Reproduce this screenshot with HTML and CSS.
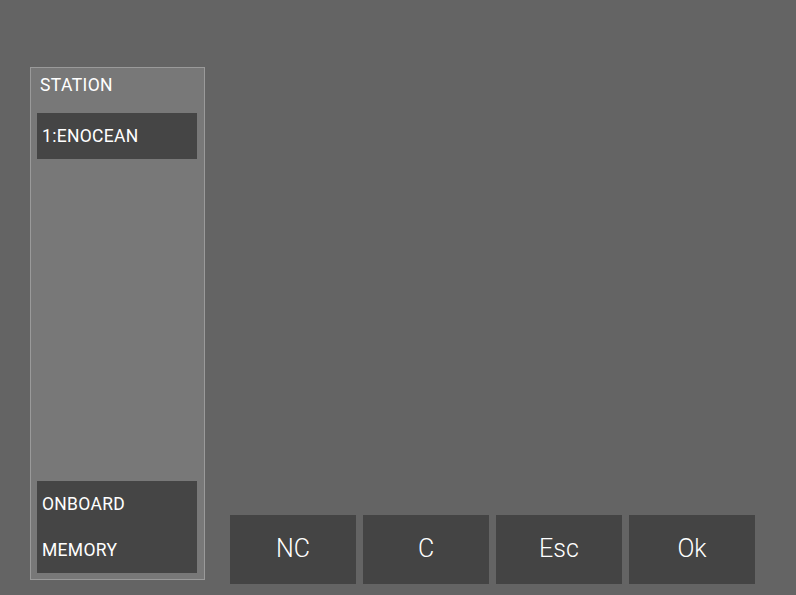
FILE: index.html
```html
<!DOCTYPE html>
<html>
<head>
<meta charset="utf-8">
<link rel="stylesheet" href="styles.css">
</head>
<body>
<div class="screen">
  <div class="panel">
    <div class="panel-title">STATION</div>
    <div class="item">1:ENOCEAN</div>
    <div class="spacer"></div>
    <div class="item item-tall">
      <div class="line">ONBOARD</div>
      <div class="line">MEMORY</div>
    </div>
  </div>
  <div class="buttons">
    <div class="btn">NC</div>
    <div class="btn">C</div>
    <div class="btn">Esc</div>
    <div class="btn">Ok</div>
  </div>
</div>
</body>
</html>
```
FILE: styles.css
```css
html, body {
  margin: 0;
  padding: 0;
  background: #646464;
}
.screen {
  width: 796px;
  height: 595px;
  box-sizing: border-box;
  padding: 67px 0 0 30px;
  display: flex;
  font-family: Roboto, "Liberation Sans", sans-serif;
  color: #ffffff;
}
.panel {
  width: 175px;
  height: 513px;
  box-sizing: border-box;
  border: 1px solid #9a9a9a;
  background: #787878;
  padding: 0 7px 6px 6px;
  display: flex;
  flex-direction: column;
}
.panel-title {
  font-size: 17.5px;
  letter-spacing: 0.4px;
  line-height: 20px;
  padding: 7px 0 0 3px;
  height: 37px;
  box-sizing: border-box;
  margin-bottom: 8px;
}
.item {
  background: #454545;
  font-size: 17.5px;
  letter-spacing: 0.3px;
  line-height: 46px;
  height: 46px;
  padding-left: 5px;
}
.spacer {
  flex: 1;
}
.item-tall {
  height: 92px;
}
.buttons {
  align-self: flex-end;
  display: flex;
  gap: 7px;
  margin-left: 25px;
  margin-bottom: 11px;
}
.btn {
  width: 126px;
  height: 69px;
  box-sizing: border-box;
  padding-bottom: 3px;
  background: #444444;
  display: flex;
  align-items: center;
  justify-content: center;
  font-size: 25px;
  font-weight: 300;
}
```
